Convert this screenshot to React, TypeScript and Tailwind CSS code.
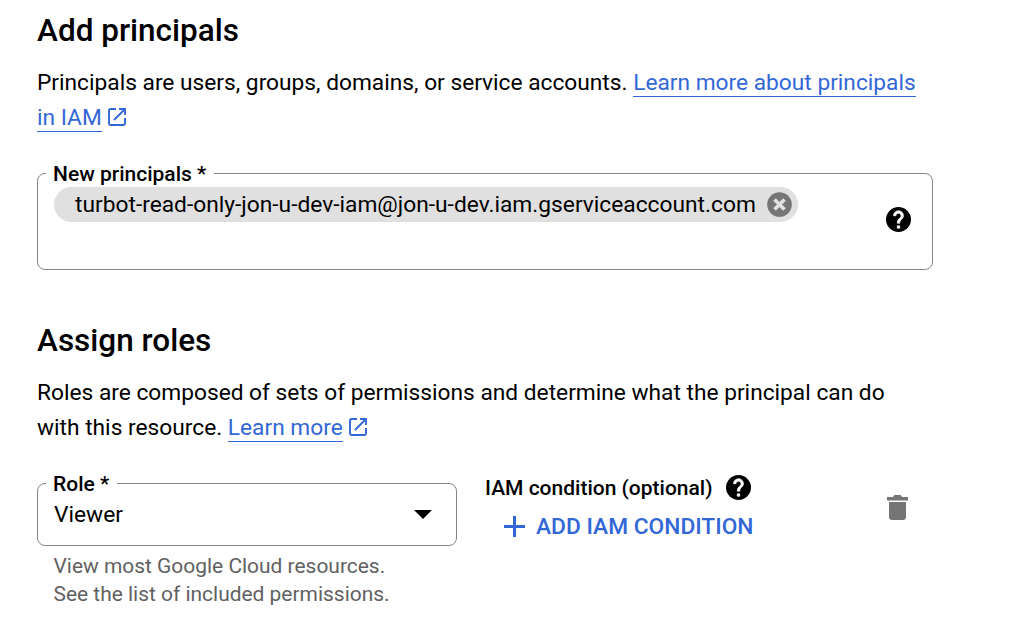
import type { ReactNode } from "react";

function Link({ children }: { children: ReactNode }) {
  return (
    <a href="#" className="border-b border-[#3367d6] text-[#3367d6]">
      {children}
    </a>
  );
}

function OpenInNew() {
  return (
    <svg viewBox="0 0 18 18" className="ml-1.5 inline-block size-[18px] align-[-1px]" fill="none" stroke="#3367d6" strokeWidth="1.9">
      <path d="M8 1H2.5Q1 1 1 2.5V15.5Q1 17 2.5 17H15.5Q17 17 17 15.5V10" />
      <path d="M11 1H17V7M17 1L6 12" />
    </svg>
  );
}

function Help() {
  return (
    <svg viewBox="2 2 20 20" className="size-[25px] shrink-0">
      <circle cx="12" cy="12" r="10" fill="#000" />
      <path
        fill="#fff"
        stroke="#fff"
        strokeWidth="0.5"
        d="M13 19h-2v-2h2v2zm2.07-7.75l-.9.92C13.45 12.9 13 13.5 13 15h-2v-.5c0-1.1.45-2.1 1.17-2.83l1.24-1.26c.37-.36.59-.86.59-1.41 0-1.1-.9-2-2-2s-2 .9-2 2H8c0-2.21 1.79-4 4-4s4 1.79 4 4c0 .88-.36 1.68-.93 2.25z"
      />
    </svg>
  );
}

function Field({ label, className, children }: { label: string; className: string; children: ReactNode }) {
  return (
    <fieldset className={`rounded-lg border border-[#80868b] ${className}`}>
      <legend className="ml-2 h-[21px] pr-2 pl-[7px] text-[21px] leading-[23px] font-medium">{label}</legend>
      {children}
    </fieldset>
  );
}

export default function App() {
  return (
    <main className="h-[626px] w-[1018px] overflow-hidden bg-white pt-[9px] pl-[37px] font-[Roboto,sans-serif] text-[22.75px] leading-[35px] whitespace-nowrap text-black">
      <section className="h-[310px]">
        <h2 className="h-[56px] text-[31.5px] leading-[44px] font-medium">Add principals</h2>
        <p className="h-[98px] text-[22.72px]">
          Principals are users, groups, domains, or service accounts. <Link>Learn more about principals</Link>
          <br />
          <Link>in IAM</Link>
          <OpenInNew />
        </p>
        <Field label="New principals *" className="h-[107px] w-[896px]">
          <div className="flex items-start justify-between pt-[3px] pr-[21px] pl-4">
            <div className="flex h-[35px] w-[744px] items-center justify-between rounded-full bg-[#e0e0e0] pr-[6.5px] pl-[21px]">
              <span>turbot-read-only-jon-u-dev-iam@jon-u-dev.iam.gserviceaccount.com</span>
              <svg viewBox="0 0 25 25" className="size-[25px]">
                <circle cx="12.5" cy="12.5" r="12.3" fill="#757575" />
                <path d="M7.5 7.5L17.5 17.5M17.5 7.5L7.5 17.5" stroke="#e0e0e0" strokeWidth="3.8" />
              </svg>
            </div>
            <div className="pt-5">
              <Help />
            </div>
          </div>
        </Field>
      </section>
      <section>
        <h2 className="h-[56px] text-[31.5px] leading-[44px] font-medium">Assign roles</h2>
        <p className="h-[98px] text-[22.72px]">
          Roles are composed of sets of permissions and determine what the principal can do
          <br />
          with this resource. <Link>Learn more</Link>
          <OpenInNew />
        </p>
        <div className="flex items-start">
          <div className="w-[420px]">
            <Field label="Role *" className="h-[73px] w-[420px]">
              <div className="flex h-[41px] items-center justify-between pr-6 pl-4">
                <span>Viewer</span>
                <svg viewBox="0 0 18 9" className="h-[9px] w-[18px]">
                  <path d="M0 0H18L9 9Z" />
                </svg>
              </div>
            </Field>
            <p className="pt-[6px] pl-[16.5px] text-[20.95px] leading-7 text-[#616161]">
              View most Google Cloud resources.
              <br />
              See the list of included permissions.
            </p>
          </div>
          <div className="ml-7 w-[402px]">
            <div className="flex h-[28px] items-center gap-[13px] text-[21px] leading-[28px] font-medium">
              <span className="pt-0.5">IAM condition (optional)</span>
              <Help />
            </div>
            <button className="mt-2 flex h-[35px] items-center gap-[11px] pl-[19px] font-medium text-[#3367d6]">
              <svg viewBox="0 0 21 21" className="size-[21px]" stroke="currentColor" strokeWidth="3">
                <path d="M10.5 0V21M0 10.5H21" />
              </svg>
              ADD IAM CONDITION
            </button>
          </div>
          <svg viewBox="0 0 21 25" className="mt-[22px] h-[25px] w-[21px]" fill="#757575">
            <path d="M0 2H6L7.3 0H13.7L15 2H21V5.5H0ZM2 7H19V22Q19 25 16 25H5Q2 25 2 22Z" />
          </svg>
        </div>
      </section>
    </main>
  );
}
